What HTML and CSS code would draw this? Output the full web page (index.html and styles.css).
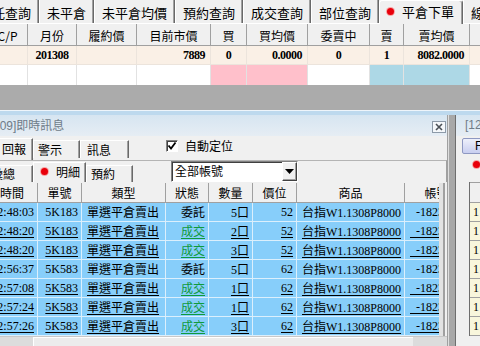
FILE: index.html
```html
<!DOCTYPE html>
<html lang="zh-Hant">
<head>
<meta charset="UTF-8">
<meta name="viewport" content="width=device-width, initial-scale=1.0">
<title>平倉下單</title>
<link rel="stylesheet" href="styles.css">
</head>
<body>
<div class="screen">
  <div class="tabbar">
    <div class="tab first">委託查詢</div>
    <div class="tab">未平倉</div>
    <div class="tab">未平倉均價</div>
    <div class="tab">預約查詢</div>
    <div class="tab">成交查詢</div>
    <div class="tab">部位查詢</div>
    <div class="tab active"><span class="radio"></span>平倉下單</div>
    <div class="tab">線上下單</div>
  </div>

  <div class="pos">
    <div class="pos-row head">
      <div>C/P</div><div>月份</div><div>履約價</div><div>目前市價</div><div>買</div>
      <div>買均價</div><div>委賣中</div><div>賣</div><div>賣均價</div><div></div>
    </div>
    <div class="pos-row data">
      <div></div><div>201308</div><div></div><div class="r">7889</div><div>0</div>
      <div class="r">0.0000</div><div>0</div><div>1</div><div class="r">8082.0000</div><div></div>
    </div>
    <div class="pos-row blank">
      <div></div><div></div><div></div><div></div><div class="buy"></div>
      <div class="buy"></div><div></div><div class="sell"></div><div class="sell"></div><div></div>
    </div>
  </div>

  <div class="gray-gap"></div>

  <div class="lower">
    <div class="panel">
      <div class="title">
        <span class="title-text">[0509]即時訊息</span>
        <svg class="close" width="14" height="12" viewBox="0 0 14 12">
          <rect x="0.5" y="0.5" width="13" height="11" fill="#f4f7fa" stroke="#8d9aa8"/>
          <path d="M4 3 L10 9 M10 3 L4 9" stroke="#4a4f55" stroke-width="1.6"/>
        </svg>
      </div>
      <div class="body">
        <div class="tabs1">
          <div class="ptab sel w-report">回報</div>
          <div class="ptab w47">警示</div>
          <div class="ptab w49">訊息</div>
          <label class="auto">
            <span class="check">
              <svg width="10" height="10" viewBox="0 0 10 10"><path d="M1.5 4.5 L4 7.5 L8.5 1.5" fill="none" stroke="#000" stroke-width="1.8"/></svg>
            </span>
            自動定位
          </label>
        </div>
        <div class="tabs2">
          <div class="ptab w47 sum">彙總</div>
          <div class="ptab sel w53"><span class="radio"></span>明細</div>
          <div class="ptab w47">預約</div>
          <div class="combo">
            <span class="combo-text">全部帳號</span>
            <span class="combo-btn">
              <svg width="9" height="5" viewBox="0 0 9 5"><path d="M0 0 H9 L4.5 5 Z" fill="#000"/></svg>
            </span>
          </div>
        </div>
        <div class="gridbox">
          <div class="gridwrap">
            <div class="grid">
              <div class="grow ghead">
                <div>時間</div><div>單號</div><div>類型</div><div>狀態</div>
                <div>數量</div><div>價位</div><div>商品</div><div>帳號</div>
              </div>
              <div class="grow">
                <div class="r">12:48:03</div><div class="r">5K183</div><div class="l">單選平倉賣出</div><div class="r">委託</div>
                <div class="r">5口</div><div class="r">52</div><div class="l">台指W1.1308P8000</div><div class="l">&nbsp;&nbsp;-1823047</div>
              </div>
              <div class="grow deal">
                <div class="r"><u>12:48:20</u></div><div class="r"><u>5K183</u></div><div class="l"><u>單選平倉賣出</u></div><div class="r"><u class="done">成交</u></div>
                <div class="r"><u>2口</u></div><div class="r"><u>52</u></div><div class="l"><u>台指W1.1308P8000</u></div><div class="l"><u>&nbsp;&nbsp;-1823047</u></div>
              </div>
              <div class="grow deal">
                <div class="r"><u>12:48:20</u></div><div class="r"><u>5K183</u></div><div class="l"><u>單選平倉賣出</u></div><div class="r"><u class="done">成交</u></div>
                <div class="r"><u>3口</u></div><div class="r"><u>52</u></div><div class="l"><u>台指W1.1308P8000</u></div><div class="l"><u>&nbsp;&nbsp;-1823047</u></div>
              </div>
              <div class="grow">
                <div class="r">12:56:37</div><div class="r">5K583</div><div class="l">單選平倉賣出</div><div class="r">委託</div>
                <div class="r">5口</div><div class="r">62</div><div class="l">台指W1.1308P8000</div><div class="l">&nbsp;&nbsp;-1823047</div>
              </div>
              <div class="grow deal">
                <div class="r"><u>12:57:08</u></div><div class="r"><u>5K583</u></div><div class="l"><u>單選平倉賣出</u></div><div class="r"><u class="done">成交</u></div>
                <div class="r"><u>1口</u></div><div class="r"><u>62</u></div><div class="l"><u>台指W1.1308P8000</u></div><div class="l"><u>&nbsp;&nbsp;-1823047</u></div>
              </div>
              <div class="grow deal">
                <div class="r"><u>12:57:24</u></div><div class="r"><u>5K583</u></div><div class="l"><u>單選平倉賣出</u></div><div class="r"><u class="done">成交</u></div>
                <div class="r"><u>1口</u></div><div class="r"><u>62</u></div><div class="l"><u>台指W1.1308P8000</u></div><div class="l"><u>&nbsp;&nbsp;-1823047</u></div>
              </div>
              <div class="grow deal">
                <div class="r"><u>12:57:26</u></div><div class="r"><u>5K583</u></div><div class="l"><u>單選平倉賣出</u></div><div class="r"><u class="done">成交</u></div>
                <div class="r"><u>3口</u></div><div class="r"><u>62</u></div><div class="l"><u>台指W1.1308P8000</u></div><div class="l"><u>&nbsp;&nbsp;-1823047</u></div>
              </div>
            </div>
          </div>
        </div>
        <div class="hscroll"><div class="thumb"></div></div>
      </div>
    </div>

    <div class="splitter"></div>

    <div class="side">
      <div class="side-title">[1205]</div>
      <div class="side-btn">F</div>
      <div class="side-radio"><span class="radio"></span></div>
      <div class="side-grid">
        <div class="scell shead"></div>
        <div class="scell">1</div>
        <div class="scell">1</div>
        <div class="scell">1</div>
        <div class="scell">1</div>
        <div class="scell">1</div>
        <div class="scell">1</div>
        <div class="scell">1</div>
      </div>
    </div>
  </div>
</div>
</body>
</html>
```

FILE: styles.css
```css
* {
  box-sizing: border-box;
}
body {
  margin: 0;
  background: #f0f0f0;
  font-family: "Noto Sans CJK TC", sans-serif;
  font-size: 12px;
  color: #000;
}
.screen {
  width: 480px;
  height: 346px;
  overflow: hidden;
}

/* top tab strip */
.tabbar {
  display: flex;
  align-items: flex-start;
  height: 24px;
  border-bottom: 1px solid #fff;
}
.tab {
  flex: none;
  display: flex;
  align-items: center;
  height: 23px;
  padding: 2px 7px 0;
  font-size: 13px;
  line-height: 18px;
  white-space: nowrap;
  border-left: 1px solid #fff;
  border-right: 1px solid #696969;
  box-shadow: inset -1px 0 #a0a0a0;
}
.tab.first {
  margin-left: -29px;
}
.tab.active {
  height: 24px;
  padding: 1px 8px 3px 7px;
  gap: 8px;
  border-top: 1px solid #fff;
  border-radius: 3px 3px 0 0;
  background: #f0f0f0;
}
.radio {
  display: inline-block;
  width: 7px;
  height: 7px;
  border-radius: 50%;
  background: #e8000b;
  box-shadow: 0 0 0 1px #f6a5a5;
}

/* position table */
.pos {
  overflow: hidden;
}
.pos-row {
  display: grid;
  grid-template-columns: 40px 49px 60px 74px 36px 61px 62px 34px 66px 40px;
  margin-left: -12px;
}
.pos-row > div {
  display: flex;
  align-items: center;
  justify-content: center;
  border-right: 1px solid #e2e2e2;
}
.pos-row .r {
  justify-content: flex-end;
  padding-right: 5px;
}
.pos-row.head {
  height: 22px;
  background: #f0f0f0;
  border-bottom: 1px solid #a0a0a0;
}
.pos-row.head > div {
  border-right-color: #a0a0a0;
  padding-top: 1px;
}
.pos-row.data {
  height: 19px;
  background: #faf0e6;
  font-family: "Liberation Serif", serif;
  font-weight: bold;
  font-size: 12px;
  letter-spacing: -0.5px;
  border-bottom: 1px solid #ece4dc;
}
.pos-row.data > div {
  border-right-color: #ece4dc;
}
.pos-row.blank {
  height: 20px;
  background: #fff;
}
.pos-row .buy {
  background: #ffc0cb;
}
.pos-row .sell {
  background: #add8e6;
}
.gray-gap {
  height: 25px;
  background: #ababab;
}

/* lower area */
.lower {
  display: flex;
  height: 236px;
  padding-top: 4px;
  background: #bdd9ee;
  border-top: 1px solid #eef5fb;
}
.panel {
  width: 448px;
  flex: none;
  display: flex;
  flex-direction: column;
  border-right: 1px solid #a0a0a0;
}
.title {
  height: 21px;
  flex: none;
  display: flex;
  align-items: center;
  justify-content: space-between;
  background: linear-gradient(#d6e5f1, #e6edf4);
  overflow: hidden;
}
.title-text {
  margin-left: -17px;
  font-family: "Liberation Sans", "Noto Sans CJK TC", sans-serif;
  color: #6f7c89;
  line-height: 16px;
}
.close {
  margin-right: 1px;
  margin-top: 2px;
}
.body {
  flex: 1;
  display: flex;
  flex-direction: column;
  background: #f0f0f0;
  overflow: hidden;
}

/* panel tabs */
.tabs1 {
  height: 24px;
  flex: none;
  display: flex;
  align-items: flex-end;
}
.tabs2 {
  height: 22px;
  flex: none;
  display: flex;
  align-items: flex-end;
  border-top: 1px solid #b4b4b4;
  border-right: 1px solid #a0a0a0;
}
.ptab {
  flex: none;
  display: flex;
  align-items: center;
  height: 18px;
  margin-bottom: 2px;
  padding-left: 4px;
  line-height: 16px;
  white-space: nowrap;
  border-left: 1px solid #fff;
  border-top: 1px solid #fff;
  border-right: 1px solid #696969;
  box-shadow: inset -1px 0 #a0a0a0;
}
.ptab.sel {
  height: 22px;
  margin-bottom: 0;
  padding-bottom: 2px;
}
.tabs2 .ptab {
  height: 17px;
  margin-bottom: 0;
}
.tabs2 .ptab.sel {
  height: 20px;
  padding-left: 7px;
  gap: 8px;
}
.w-report {
  width: 36px;
  margin-left: -3px;
}
.w47 {
  width: 47px;
}
.w49 {
  width: 49px;
  padding-left: 6px;
}
.w53 {
  width: 53px;
}
.sum {
  margin-left: -14px;
}
.auto {
  align-self: flex-start;
  display: flex;
  align-items: center;
  gap: 7px;
  margin: 3px 0 0 37px;
  font-size: 12px;
  line-height: 14px;
}
.check {
  display: flex;
  align-items: center;
  justify-content: center;
  width: 12px;
  height: 12px;
  background: #fff;
  border: 1px solid;
  border-color: #808080 #fff #fff #808080;
  box-shadow: inset 1px 1px #404040;
}
.combo {
  align-self: flex-start;
  display: flex;
  width: 127px;
  height: 21px;
  margin-left: 38px;
  background: #fff;
  border: 1px solid;
  border-color: #808080 #fff #fff #808080;
  box-shadow: inset 1px 1px #404040;
}
.combo-text {
  flex: 1;
  padding-left: 3px;
  line-height: 18px;
}
.combo-btn {
  width: 15px;
  display: flex;
  align-items: center;
  justify-content: center;
  background: #f0f0f0;
  border: 1px solid;
  border-color: #fff #404040 #404040 #fff;
  box-shadow: inset -1px -1px #a0a0a0;
}

/* detail grid */
.gridbox {
  flex: none;
  width: 445px;
  height: 153px;
  margin-top: 1px;
  background: #e2e2e2;
  border-right: 2px solid #a0a0a0;
}
.gridwrap {
  width: 439px;
  height: 100%;
  overflow: hidden;
  background: #87cefa;
}
.grid {
  margin-left: -13px;
  width: max-content;
}
.grow {
  display: grid;
  grid-template-columns: 51px 44px 84px 43px 44px 44px 108px 64px;
  height: 19px;
  font-family: "Liberation Serif", "Noto Sans CJK TC", serif;
  white-space: nowrap;
}
.grow > div {
  display: flex;
  align-items: center;
  overflow: hidden;
  border-right: 1px solid #dbeffc;
  border-bottom: 1px solid #dbeffc;
}
.grow .r {
  justify-content: flex-end;
  padding-right: 3px;
}
.grow .l {
  padding-left: 5px;
}
.grow.ghead {
  height: 20px;
  background: #f0f0f0;
  font-family: "Noto Sans CJK TC", sans-serif;
}
.grow.ghead > div {
  justify-content: center;
  border-right-color: #a0a0a0;
  border-bottom-color: #a0a0a0;
}
.grow u {
  text-decoration: underline;
  text-underline-offset: 2px;
}
.grow .done {
  color: #0f9a3c;
}
.grow > div:nth-child(4) {
  color: #000;
}
.hscroll {
  flex: 1;
  background: #dcdcdc;
  border-top: 1px solid #c8c8c8;
}
.thumb {
  height: 100%;
  margin-left: 33px;
  width: 380px;
  background: #ececec;
  border-top: 1px solid #fff;
  border-left: 1px solid #fff;
}

/* splitter and right panel */
.splitter {
  width: 8px;
  flex: none;
  background: #a8a8a8;
  border-left: 1px solid #dedede;
  border-right: 1px solid #6e6e6e;
}
.side {
  flex: 1;
  display: flex;
  flex-direction: column;
  background: #f0f0f0;
  overflow: hidden;
}
.side-title {
  height: 21px;
  flex: none;
  padding: 2px 0 0 9px;
  background: linear-gradient(#d6e5f1, #e6edf4);
  color: #6f7c89;
  font-family: "Liberation Sans", sans-serif;
  line-height: 16px;
  white-space: nowrap;
}
.side-btn {
  height: 16px;
  flex: none;
  width: 40px;
  margin: 2px 0 0 6px;
  padding-left: 12px;
  line-height: 14px;
  font-family: "Liberation Sans", sans-serif;
  background: linear-gradient(#eef0fb, #c8cef0);
  border: 1px solid #8e98c2;
  border-radius: 2px;
}
.side-radio {
  height: 28px;
  flex: none;
  display: flex;
  align-items: flex-start;
  padding: 7px 0 0 17px;
}
.side-grid {
  margin-left: 13px;
  border-left: 1px solid #6e6e6e;
  width: 40px;
}
.scell {
  height: 19px;
  padding-left: 3px;
  background: #f8f6dc;
  border-bottom: 1px solid #a0a0a0;
  font-family: "Liberation Serif", serif;
  line-height: 18px;
}
.scell.shead {
  height: 21px;
  background: #f0f0f0;
  border-top: 1px solid #a0a0a0;
}
```
